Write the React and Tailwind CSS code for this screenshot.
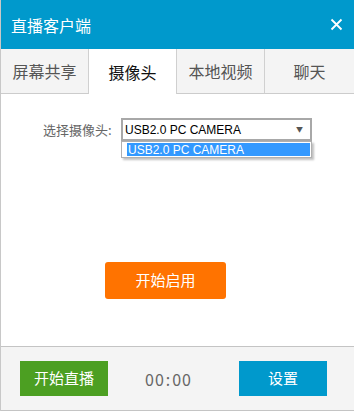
const cjk = { fontFamily: '"Microsoft YaHei", "Noto Sans CJK SC", sans-serif' }
const latin = { fontFamily: '"Liberation Sans", Arial, sans-serif' }

const tabs = [
  { name: '屏幕共享', w: 'w-[88px]' },
  { name: '摄像头', w: 'w-[88px]', active: true },
  { name: '本地视频', w: 'w-[88px]' },
  { name: '聊天', w: 'w-[89px]' },
]

export default function App() {
  return (
    <div className="w-[354px] h-[411px] flex flex-col border-l border-[#c8c8c8] bg-white" style={cjk}>
      {/* Title bar */}
      <div className="h-[49px] bg-[#0099cc] flex items-center justify-between pl-[10px] pr-[10px]">
        <span className="text-white text-[16px] leading-none">直播客户端</span>
        <svg width="13" height="13" viewBox="0 0 13 13" className="mr-[1px]">
          <path d="M1.5 1.5 L11.5 11.5 M11.5 1.5 L1.5 11.5" stroke="#fff" strokeWidth="1.8" />
        </svg>
      </div>

      {/* Tabs */}
      <div className="h-[45px] flex">
        {tabs.map((t) => (
          <div
            key={t.name}
            className={`${t.w} h-full flex items-center justify-center text-[16px] border-r border-[#d0d0d0] last:border-r-0 ${
              t.active ? 'bg-white text-[#111]' : 'bg-[#f4f4f4] text-[#555] border-b border-b-[#cccccc]'
            }`}
          >
            {t.name}
          </div>
        ))}
      </div>

      {/* Content */}
      <div className="flex-1 flex flex-col pt-[24px]">
        <div className="flex items-center h-[23px]">
          <span className="ml-[42px] w-[78px] text-[13px] text-[#666]">选择摄像头:</span>
          <div className="relative">
            <div className="w-[191px] h-[23px] border-2 border-[#a8a8a8] flex items-center justify-between pl-[2px] pr-[7px]">
              <span className="text-[12px] text-black" style={latin}>
                USB2.0 PC CAMERA
              </span>
              <span className="text-[7px] text-[#555]">▼</span>
            </div>
            <div className="absolute left-0 top-[23px] w-[191px] h-[17px] bg-white border border-[#b0b0b0] shadow-[2px_2px_2px_rgba(0,0,0,0.25)] pl-[5px] pr-[1px] py-[1px]">
              <div className="h-full bg-[#3399ff] flex items-center pl-[1px]">
                <span className="text-[12px] text-white" style={latin}>
                  USB2.0 PC CAMERA
                </span>
              </div>
            </div>
          </div>
        </div>

        <button className="mt-[121px] ml-[104px] w-[121px] h-[37px] rounded-[3px] bg-[#ff7300] text-white text-[15px] flex items-center justify-center">
          开始启用
        </button>
      </div>

      {/* Footer */}
      <div className="h-[65px] border-t border-b border-[#c4c4c4] bg-[#f4f4f4] flex items-center">
        <button className="ml-[19px] w-[88px] h-[35px] bg-[#4c9f22] text-white text-[15px] flex items-center justify-center">
          开始直播
        </button>
        <span className="ml-[36px] w-[49px] text-[16px] text-[#666] text-center tracking-[1px]">
          00<span className="mx-[1px]">:</span>00
        </span>
        <button className="ml-[46px] w-[88px] h-[35px] bg-[#0099cc] text-white text-[15px] flex items-center justify-center">
          设置
        </button>
      </div>
    </div>
  )
}
